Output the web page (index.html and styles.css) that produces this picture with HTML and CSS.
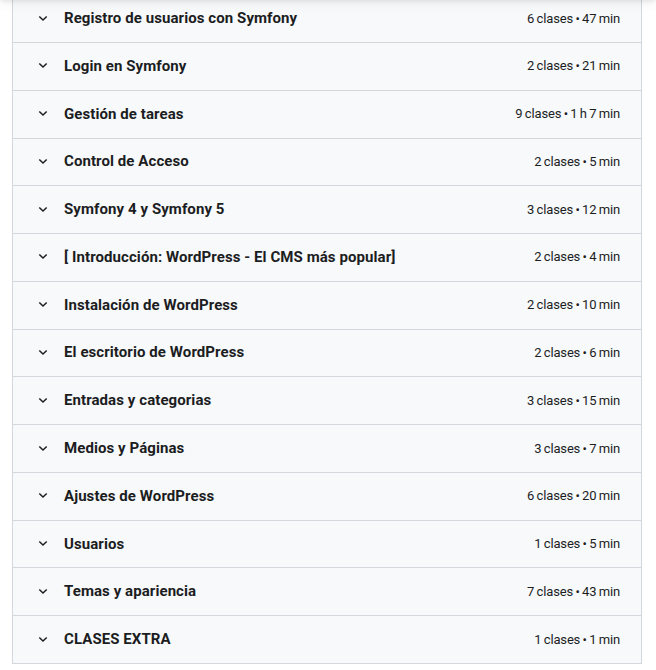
FILE: index.html
```html
<!DOCTYPE html>
<html lang="es">
<head>
<meta charset="utf-8">
<title>Contenido del curso</title>
<link rel="stylesheet" href="styles.css">
</head>
<body>
<div class="sticky-shadow"></div>
<div class="curriculum">
  <div class="section"><span class="chev"><svg width="10" height="7" viewBox="0 0 10 7"><path d="M1.3 1.5 L5 5 L8.7 1.5" fill="none" stroke="#1c1d1f" stroke-width="1.5"/></svg></span><span class="title">Registro de usuarios con Symfony</span><span class="meta">6 clases • 47 min</span></div>
  <div class="section"><span class="chev"><svg width="10" height="7" viewBox="0 0 10 7"><path d="M1.3 1.5 L5 5 L8.7 1.5" fill="none" stroke="#1c1d1f" stroke-width="1.5"/></svg></span><span class="title">Login en Symfony</span><span class="meta">2 clases • 21 min</span></div>
  <div class="section"><span class="chev"><svg width="10" height="7" viewBox="0 0 10 7"><path d="M1.3 1.5 L5 5 L8.7 1.5" fill="none" stroke="#1c1d1f" stroke-width="1.5"/></svg></span><span class="title">Gestión de tareas</span><span class="meta">9 clases • 1 h 7 min</span></div>
  <div class="section"><span class="chev"><svg width="10" height="7" viewBox="0 0 10 7"><path d="M1.3 1.5 L5 5 L8.7 1.5" fill="none" stroke="#1c1d1f" stroke-width="1.5"/></svg></span><span class="title">Control de Acceso</span><span class="meta">2 clases • 5 min</span></div>
  <div class="section"><span class="chev"><svg width="10" height="7" viewBox="0 0 10 7"><path d="M1.3 1.5 L5 5 L8.7 1.5" fill="none" stroke="#1c1d1f" stroke-width="1.5"/></svg></span><span class="title">Symfony 4 y Symfony 5</span><span class="meta">3 clases • 12 min</span></div>
  <div class="section"><span class="chev"><svg width="10" height="7" viewBox="0 0 10 7"><path d="M1.3 1.5 L5 5 L8.7 1.5" fill="none" stroke="#1c1d1f" stroke-width="1.5"/></svg></span><span class="title">[ Introducción: WordPress - El CMS más popular]</span><span class="meta">2 clases • 4 min</span></div>
  <div class="section"><span class="chev"><svg width="10" height="7" viewBox="0 0 10 7"><path d="M1.3 1.5 L5 5 L8.7 1.5" fill="none" stroke="#1c1d1f" stroke-width="1.5"/></svg></span><span class="title">Instalación de WordPress</span><span class="meta">2 clases • 10 min</span></div>
  <div class="section"><span class="chev"><svg width="10" height="7" viewBox="0 0 10 7"><path d="M1.3 1.5 L5 5 L8.7 1.5" fill="none" stroke="#1c1d1f" stroke-width="1.5"/></svg></span><span class="title">El escritorio de WordPress</span><span class="meta">2 clases • 6 min</span></div>
  <div class="section"><span class="chev"><svg width="10" height="7" viewBox="0 0 10 7"><path d="M1.3 1.5 L5 5 L8.7 1.5" fill="none" stroke="#1c1d1f" stroke-width="1.5"/></svg></span><span class="title">Entradas y categorias</span><span class="meta">3 clases • 15 min</span></div>
  <div class="section"><span class="chev"><svg width="10" height="7" viewBox="0 0 10 7"><path d="M1.3 1.5 L5 5 L8.7 1.5" fill="none" stroke="#1c1d1f" stroke-width="1.5"/></svg></span><span class="title">Medios y Páginas</span><span class="meta">3 clases • 7 min</span></div>
  <div class="section"><span class="chev"><svg width="10" height="7" viewBox="0 0 10 7"><path d="M1.3 1.5 L5 5 L8.7 1.5" fill="none" stroke="#1c1d1f" stroke-width="1.5"/></svg></span><span class="title">Ajustes de WordPress</span><span class="meta">6 clases • 20 min</span></div>
  <div class="section"><span class="chev"><svg width="10" height="7" viewBox="0 0 10 7"><path d="M1.3 1.5 L5 5 L8.7 1.5" fill="none" stroke="#1c1d1f" stroke-width="1.5"/></svg></span><span class="title">Usuarios</span><span class="meta">1 clases • 5 min</span></div>
  <div class="section"><span class="chev"><svg width="10" height="7" viewBox="0 0 10 7"><path d="M1.3 1.5 L5 5 L8.7 1.5" fill="none" stroke="#1c1d1f" stroke-width="1.5"/></svg></span><span class="title">Temas y apariencia</span><span class="meta">7 clases • 43 min</span></div>
  <div class="section"><span class="chev"><svg width="10" height="7" viewBox="0 0 10 7"><path d="M1.3 1.5 L5 5 L8.7 1.5" fill="none" stroke="#1c1d1f" stroke-width="1.5"/></svg></span><span class="title">CLASES EXTRA</span><span class="meta">1 clases • 1 min</span></div>
</div>
</body>
</html>
```
FILE: styles.css
```css
html, body {
  margin: 0;
  padding: 0;
  background: #ffffff;
}
body {
  font-family: Roboto, "Liberation Sans", sans-serif;
  color: #1c1d1f;
}
.sticky-shadow {
  position: fixed;
  left: 0;
  right: 0;
  top: -60px;
  height: 60px;
  box-shadow: 0 2px 4px rgba(0,0,0,0.06), 0 4px 10px rgba(0,0,0,0.06);
  z-index: 5;
}
.curriculum {
  width: 630px;
  margin: -4.77px 0 0 12px;
  box-sizing: border-box;
  border: 1px solid #d1d7dc;
  border-top: none;
  background: #f7f9fa;
}
.section {
  display: flex;
  align-items: center;
  height: 47.77px;
  box-sizing: border-box;
  border-bottom: 1px solid #d1d7dc;
  padding: 0 21px 1px 25px;
}
.section:last-child {
  border-bottom: none;
  height: 46.77px;
}
.chev {
  width: 10px;
  height: 7px;
  display: flex;
  margin-right: 16px;
}
.chev svg { display: block; }
.title {
  flex: 1;
  font-size: 15px;
  font-weight: 700;
  letter-spacing: 0.08px;
}
.meta {
  font-size: 13px;
  font-weight: 400;
  letter-spacing: -0.15px;
  word-spacing: -0.7px;
  color: #1c1d1f;
}
```
